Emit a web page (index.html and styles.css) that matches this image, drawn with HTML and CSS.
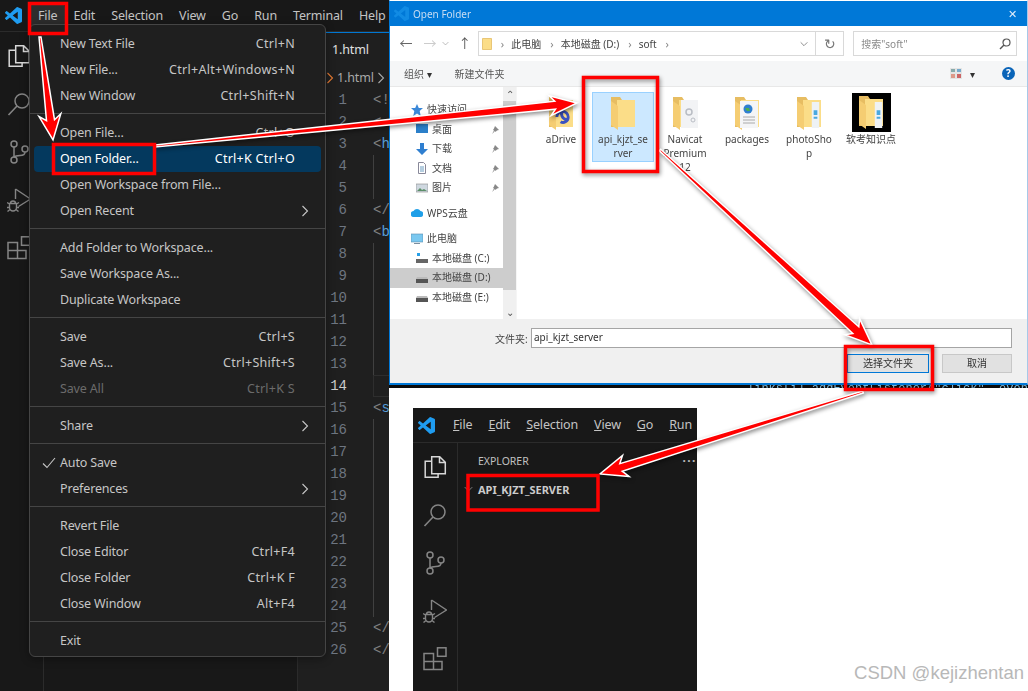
FILE: index.html
```html
<!DOCTYPE html>
<html lang="en">
<head>
<meta charset="utf-8">
<title>Open Folder in VS Code</title>
<link rel="stylesheet" href="styles.css">
</head>
<body>
<svg class="defs" width="0" height="0" aria-hidden="true">
  <symbol id="i-vscode" viewBox="0 0 24 24"><path fill="#1f9cf0" d="M23.15 2.587L18.21.21a1.494 1.494 0 0 0-1.705.29l-9.46 8.63-4.12-3.128a.999.999 0 0 0-1.276.057L.327 7.261A1 1 0 0 0 .326 8.74L3.899 12 .326 15.26a1 1 0 0 0 .001 1.479L1.65 17.94a.999.999 0 0 0 1.276.057l4.12-3.128 9.46 8.63a1.492 1.492 0 0 0 1.704.29l4.942-2.377A1.5 1.5 0 0 0 24 20.06V3.939a1.5 1.5 0 0 0-.85-1.352zm-5.146 14.861L10.826 12l7.178-5.448v10.896z"/></symbol>
  <symbol id="i-files" viewBox="0 0 24 24"><path fill="none" stroke="currentColor" stroke-width="1.5" d="M8.7 1.7h8l5.6 5.6v11.5H8.7zM16.5 1.7v5.8h5.8M8.7 6.3H2.2v16h12.9v-3.5"/></symbol>
  <symbol id="i-search" viewBox="0 0 24 24"><circle cx="15" cy="9" r="7" fill="none" stroke="currentColor" stroke-width="1.5"/><path fill="none" stroke="currentColor" stroke-width="1.6" d="M10 14 1.5 23"/></symbol>
  <symbol id="i-git" viewBox="0 0 24 24"><g fill="none" stroke="currentColor" stroke-width="1.5"><circle cx="7" cy="4" r="3"/><circle cx="7" cy="20" r="3"/><circle cx="18" cy="9" r="3"/><path d="M7 7v10M18 12c0 3-2 3.500-5 3.500-3 0-5 .5-6 2"/></g></symbol>
  <symbol id="i-debug" viewBox="0 0 24 24"><g fill="none" stroke="currentColor" stroke-width="1.400"><path d="M8.500 1 23.500 11 11.500 18.500M8.500 1v10"/><path d="M2.500 15.500h7v4a3.500 3.500 0 0 1-7 0zM3.500 15.500a2.500 2.500 0 0 1 5 0M2.500 16 0 14.500M2.500 19.500H0M3 21.500.5 23.500M9.500 16 12 14.500M9.500 19.500H12M9 21.500l2.500 2"/></g></symbol>
  <symbol id="i-ext" viewBox="0 0 24 24"><g fill="none" stroke="currentColor" stroke-width="1.500"><path d="M1 6.500h9.500v16H1zM1 14.500h18v8h-8.500"/><rect x="14.500" y="0.800" width="8.500" height="8.500"/></g></symbol>
  <symbol id="i-chev" viewBox="0 0 8 12"><path d="M1.500 1 6.500 6l-5 5" fill="none" stroke="currentColor" stroke-width="1.100"/></symbol>
  <symbol id="i-down" viewBox="0 0 12 8"><path d="M1 1.500 6 6.500l5-5" fill="none" stroke="currentColor" stroke-width="1.100"/></symbol>
  <symbol id="i-check" viewBox="0 0 14 12"><path d="M1 6.500 5 10.500 13 1" fill="none" stroke="currentColor" stroke-width="1.100"/></symbol>
  <symbol id="i-folder" viewBox="0 0 24 33"><path fill="#e7bd62" d="M0 0h9l2 3h13v27H0z"/><path fill="#fbdd88" d="M6 3h18v27H6z"/><path fill="#f5cd72" d="M0 4 7 9v24L0 28z"/></symbol>
  <symbol id="i-folder-s" viewBox="0 0 10 12"><path fill="#fbdd88" stroke="#e3bb62" stroke-width=".8" d="M.5.5h9v11h-9z"/></symbol>
</svg>

<section class="vs vs-main">
  <header class="vs-title">
    <svg class="logo"><use href="#i-vscode"/></svg>
    <nav class="vs-nav">
      <span class="nav-active">File</span><span>Edit</span><span>Selection</span><span>View</span><span>Go</span><span>Run</span><span>Terminal</span><span>Help</span>
    </nav>
  </header>
  <div class="vs-body">
    <aside class="activity">
      <svg class="act-ico act-on"><use href="#i-files"/></svg>
      <svg class="act-ico"><use href="#i-search"/></svg>
      <svg class="act-ico"><use href="#i-git"/></svg>
      <svg class="act-ico"><use href="#i-debug"/></svg>
      <svg class="act-ico"><use href="#i-ext"/></svg>
    </aside>
    <div class="sidebar"></div>
    <main class="editor">
      <div class="tabs"><div class="tab">1.html</div></div>
      <div class="crumbs"><svg class="crumb-ico"><use href="#i-chev"/></svg><span>1.html</span><svg class="crumb-chev"><use href="#i-chev"/></svg></div>
      <div class="code">
        <div class="ln"><b>1</b><i class="br">&lt;!</i></div>
        <div class="ln"><b>2</b><i class="br">&lt;</i></div>
        <div class="ln"><b>3</b><i class="br">&lt;<em>h</em></i></div>
        <div class="ln"><b>4</b><i class="guide"></i></div>
        <div class="ln"><b>5</b><i class="guide"></i></div>
        <div class="ln"><b>6</b><i class="br">&lt;/</i></div>
        <div class="ln"><b>7</b><i class="br">&lt;<em>b</em></i></div>
        <div class="ln"><b>8</b><i class="guide"></i></div>
        <div class="ln"><b>9</b><i class="guide"></i></div>
        <div class="ln"><b>10</b><i class="guide"></i></div>
        <div class="ln"><b>11</b><i class="guide"></i></div>
        <div class="ln"><b>12</b><i class="guide"></i></div>
        <div class="ln"><b>13</b><i class="guide"></i></div>
        <div class="ln ln-cur"><b>14</b><i class="guide"></i></div>
        <div class="ln"><b>15</b><i class="br">&lt;<em>s</em></i></div>
        <div class="ln"><b>16</b><i class="guide"></i></div>
        <div class="ln"><b>17</b><i class="guide"></i></div>
        <div class="ln"><b>18</b><i class="guide"></i></div>
        <div class="ln"><b>19</b><i class="guide"></i></div>
        <div class="ln"><b>20</b><i class="guide"></i></div>
        <div class="ln"><b>21</b><i class="guide"></i></div>
        <div class="ln"><b>22</b><i class="guide"></i></div>
        <div class="ln"><b>23</b><i class="guide"></i></div>
        <div class="ln"><b>24</b><i class="guide"></i></div>
        <div class="ln"><b>25</b><i class="br">&lt;/</i></div>
        <div class="ln"><b>26</b><i class="br">&lt;/</i></div>
      </div>
    </main>
  </div>
  <div class="menu">
    <div class="mi"><span>New Text File</span><kbd>Ctrl+N</kbd></div>
    <div class="mi"><span>New File...</span><kbd>Ctrl+Alt+Windows+N</kbd></div>
    <div class="mi"><span>New Window</span><kbd>Ctrl+Shift+N</kbd></div>
    <hr>
    <div class="mi"><span>Open File...</span><kbd>Ctrl+O</kbd></div>
    <div class="mi mi-on"><span>Open Folder...</span><kbd>Ctrl+K Ctrl+O</kbd></div>
    <div class="mi"><span>Open Workspace from File...</span></div>
    <div class="mi"><span>Open Recent</span><svg class="mi-chev"><use href="#i-chev"/></svg></div>
    <hr>
    <div class="mi"><span>Add Folder to Workspace...</span></div>
    <div class="mi"><span>Save Workspace As...</span></div>
    <div class="mi"><span>Duplicate Workspace</span></div>
    <hr>
    <div class="mi"><span>Save</span><kbd>Ctrl+S</kbd></div>
    <div class="mi"><span>Save As...</span><kbd>Ctrl+Shift+S</kbd></div>
    <div class="mi mi-off"><span>Save All</span><kbd>Ctrl+K S</kbd></div>
    <hr>
    <div class="mi"><span>Share</span><svg class="mi-chev"><use href="#i-chev"/></svg></div>
    <hr>
    <div class="mi"><svg class="mi-check"><use href="#i-check"/></svg><span>Auto Save</span></div>
    <div class="mi"><span>Preferences</span><svg class="mi-chev"><use href="#i-chev"/></svg></div>
    <hr>
    <div class="mi"><span>Revert File</span></div>
    <div class="mi"><span>Close Editor</span><kbd>Ctrl+F4</kbd></div>
    <div class="mi"><span>Close Folder</span><kbd>Ctrl+K F</kbd></div>
    <div class="mi"><span>Close Window</span><kbd>Alt+F4</kbd></div>
    <hr>
    <div class="mi"><span>Exit</span></div>
  </div>
</section>

<section class="dialog">
  <div class="dlg-win">
    <header class="dlg-title">
      <svg class="dlg-logo"><use href="#i-vscode"/></svg>
      <span class="dlg-name">Open Folder</span>
      <span class="dlg-x">✕</span>
    </header>
    <div class="dlg-addr">
      <span class="nav-btn nav-dark">←</span>
      <span class="nav-btn nav-pale">→</span>
      <svg class="nav-drop"><use href="#i-down"/></svg>
      <span class="nav-btn nav-up">↑</span>
      <div class="addr-box">
        <svg class="addr-folder"><use href="#i-folder-s"/></svg>
        <span class="sep">›</span><span>此电脑</span>
        <span class="sep">›</span><span>本地磁盘 (D:)</span>
        <span class="sep">›</span><span>soft</span>
        <span class="sep">›</span>
        <svg class="addr-drop"><use href="#i-down"/></svg>
        <span class="addr-refresh">↻</span>
      </div>
      <div class="search-box">
        <span>搜索"soft"</span>
        <svg class="search-ico" viewBox="0 0 12 12"><circle cx="7.500" cy="4.500" r="3.500" fill="none" stroke="#555" stroke-width="1.200"/><path d="M5 7 1 11" stroke="#555" stroke-width="1.500"/></svg>
      </div>
    </div>
    <div class="dlg-tools">
      <span class="tool-org">组织 <small>▾</small></span>
      <span class="tool-new">新建文件夹</span>
      <svg class="tool-view" viewBox="0 0 12 11"><rect width="12" height="11" fill="#e4e4e4"/><path d="M1 1h4v3H1z" fill="#8aa"/><path d="M7 1h4v3H7z" fill="#7ac"/><path d="M1 6h4v4H1z" fill="#d98"/><path d="M7 6h4v4H7z" fill="#c66"/></svg>
      <small class="tool-drop">▾</small>
      <span class="tool-help">?</span>
    </div>
    <div class="dlg-main">
      <ul class="tree">
        <li class="t-top"><svg viewBox="0 0 12 12"><path fill="#3b88d8" d="M6 0l1.800 4H12L8.700 7l1 5L6 9.500 2.300 12l1-5L0 4h4.200z"/></svg>快速访问</li>
        <li class="t-sub"><svg viewBox="0 0 12 12"><rect y="1" width="12" height="9" fill="#2b7fc9"/></svg>桌面<svg class="pin" viewBox="0 0 8 8"><path fill="#888" d="M4 0l4 4-2 .5L4.500 6 4 5 1 8 3 4.500 2 4l1-1.500z"/></svg></li>
        <li class="t-sub"><svg viewBox="0 0 12 12"><path fill="#2f7fd0" d="M4 0h4v6h4L6 12 0 6h4z"/></svg>下载<svg class="pin" viewBox="0 0 8 8"><path fill="#888" d="M4 0l4 4-2 .5L4.500 6 4 5 1 8 3 4.500 2 4l1-1.500z"/></svg></li>
        <li class="t-sub"><svg viewBox="0 0 12 12"><path fill="#fff" stroke="#889" d="M2.500.5h5l2 2v9h-7z"/><path stroke="#6a9cc0" d="M4 5h4M4 7h4M4 9h4"/></svg>文档<svg class="pin" viewBox="0 0 8 8"><path fill="#888" d="M4 0l4 4-2 .5L4.500 6 4 5 1 8 3 4.500 2 4l1-1.500z"/></svg></li>
        <li class="t-sub t-gap"><svg viewBox="0 0 12 12"><rect y="2" width="12" height="8" fill="#cfd8e0" stroke="#888" stroke-width=".6"/><path fill="#5c8f6a" d="M1 9l3-3 2 2 2-1 3 2z"/></svg>图片<svg class="pin" viewBox="0 0 8 8"><path fill="#888" d="M4 0l4 4-2 .5L4.500 6 4 5 1 8 3 4.500 2 4l1-1.500z"/></svg></li>
        <li class="t-top t-gap"><svg viewBox="0 0 12 12"><path fill="#1f9fe8" d="M3 10a3 3 0 0 1-.5-6A4 4 0 0 1 9.500 4 3 3 0 0 1 9 10z"/></svg>WPS云盘</li>
        <li class="t-top"><svg viewBox="0 0 12 12"><rect y="1" width="12" height="8" fill="#7ac8f0" stroke="#5a8cb0" stroke-width=".6"/><path stroke="#7a8ea0" d="M3 10.500h6"/></svg>此电脑</li>
        <li class="t-sub"><svg viewBox="0 0 12 12"><path fill="#28a0e8" d="M1 1h3v3H1z"/><rect y="7" width="12" height="4" fill="#666"/></svg>本地磁盘 (C:)</li>
        <li class="t-sub t-on"><svg viewBox="0 0 12 12"><path fill="#bbb" d="M1 5h10l1 2H0z"/><rect y="7" width="12" height="4" fill="#555"/></svg>本地磁盘 (D:)</li>
        <li class="t-sub"><svg viewBox="0 0 12 12"><path fill="#bbb" d="M1 5h10l1 2H0z"/><rect y="7" width="12" height="4" fill="#555"/></svg>本地磁盘 (E:)</li>
      </ul>
      <div class="scroll">
        <span class="sc-arrow">⌃</span>
        <div class="sc-thumb"></div>
        <span class="sc-arrow sc-end">⌄</span>
      </div>
      <div class="grid">
        <figure class="tile">
          <div class="tile-ico"><svg class="fold"><use href="#i-folder"/></svg><svg class="badge" viewBox="0 0 20 20"><path fill="none" stroke="#3a52c0" stroke-width="3" d="M4 10a6 6 0 0 1 12 0c0 5-5 7-8 5M10 4c-2 3-1 8 5 9"/></svg></div>
          <figcaption>aDrive</figcaption>
        </figure>
        <figure class="tile tile-on">
          <div class="tile-ico"><svg class="fold"><use href="#i-folder"/></svg></div>
          <figcaption>api_kjzt_se<br>rver</figcaption>
        </figure>
        <figure class="tile">
          <div class="tile-ico"><svg class="fold"><use href="#i-folder"/></svg><svg class="sheet" viewBox="0 0 18 28"><path fill="#f2f3f5" d="M1 0h17v28H1z"/><circle cx="9" cy="12" r="3" fill="none" stroke="#b9bdc4" stroke-width="1.500"/><circle cx="13" cy="20" r="2" fill="none" stroke="#b9bdc4"/></svg></div>
          <figcaption>Navicat<br>Premium<br>12</figcaption>
        </figure>
        <figure class="tile">
          <div class="tile-ico"><svg class="fold"><use href="#i-folder"/></svg><svg class="sheet sheet-wide" viewBox="0 0 18 28"><path fill="#f4f5f7" d="M0 1h18v27H0z"/><circle cx="8" cy="9" r="4.500" fill="#2f7fd0"/><path fill="#4caf50" d="M5 8h4l1 3H7z"/><path stroke="#aaa" d="M3 17h12M3 20h12M3 23h12"/></svg></div>
          <figcaption>packages</figcaption>
        </figure>
        <figure class="tile">
          <div class="tile-ico"><svg class="fold"><use href="#i-folder"/></svg><svg class="strip" viewBox="0 0 8 28"><path fill="#eef2f5" d="M0 0h8v28H0z"/><path fill="#4aa8e0" d="M2 9h4v5H2zM2 16h4v2H2z"/></svg></div>
          <figcaption>photoSho<br>p</figcaption>
        </figure>
        <figure class="tile tile-black">
          <div class="tile-ico"><svg class="fold"><use href="#i-folder"/></svg><svg class="strip" viewBox="0 0 8 28"><path fill="#eef2f5" d="M0 0h8v28H0z"/><path fill="#4aa8e0" d="M2 9h4v5H2zM2 16h4v2H2z"/></svg></div>
          <figcaption>软考知识点</figcaption>
        </figure>
      </div>
    </div>
    <div class="dlg-foot">
      <div class="foot-row">
        <label class="foot-label">文件夹:</label>
        <div class="foot-input">api_kjzt_server</div>
      </div>
      <div class="foot-btns">
        <span class="btn btn-main">选择文件夹</span>
        <span class="btn">取消</span>
      </div>
    </div>
  </div>
  <div class="dlg-under">links[i].addEventListener("click", event</div>
</section>

<section class="vs vs-small">
  <header class="vs-title vs-title-s">
    <svg class="logo"><use href="#i-vscode"/></svg>
    <nav class="vs-nav vs-nav-s">
      <span><u>F</u>ile</span><span><u>E</u>dit</span><span><u>S</u>election</span><span><u>V</u>iew</span><span><u>G</u>o</span><span><u>R</u>un</span>
    </nav>
  </header>
  <div class="vs-body">
    <aside class="activity activity-s">
      <svg class="act-ico act-on"><use href="#i-files"/></svg>
      <svg class="act-ico"><use href="#i-search"/></svg>
      <svg class="act-ico"><use href="#i-git"/></svg>
      <svg class="act-ico"><use href="#i-debug"/></svg>
      <svg class="act-ico"><use href="#i-ext"/></svg>
    </aside>
    <div class="explorer">
      <div class="exp-head"><span>EXPLORER</span><span class="exp-dots">···</span></div>
      <div class="exp-root"><svg class="exp-chev"><use href="#i-down"/></svg><span>API_KJZT_SERVER</span></div>
    </div>
  </div>
</section>

<div class="watermark">CSDN @kejizhentan</div>

<svg class="marks" viewBox="0 0 1028 691" aria-hidden="true">
  <g class="mark-shadow">
    <polygon class="arrow" points="660.700,149.300 858.800,326.800 859.600,318.600 872,345 844.700,334.800 852.800,333.400 659.300,150.700"/>
    <polygon class="arrow" points="155,145 554.700,101.200 549.100,95.700 577,103 551.100,115.700 555.500,109.200 155.100,147"/>
    <polygon class="arrow" points="862.700,391 619.800,463.600 622.500,455.500 600,474 629.100,476.500 622.200,471.200 863.300,393"/>
    <rect class="box" x="583.500" y="77.500" width="74" height="94"/>
    <rect class="box" x="845.500" y="346.500" width="87" height="43"/>
  </g>
  <polygon class="arrow" points="41,37 54.500,119.700 60.800,113.800 53,140 39,116.600 46.500,120.700 39,37"/>
  <rect class="box" x="29.500" y="3.500" width="37" height="30"/>
  <rect class="box" x="53.500" y="144.500" width="101" height="29"/>
  <rect class="box" x="468" y="475.500" width="130" height="34.500"/>
</svg>
</body>
</html>
```
FILE: styles.css
```css
* { box-sizing: border-box; }
html, body { margin: 0; padding: 0; }
body {
  position: relative;
  width: 1028px;
  height: 691px;
  overflow: hidden;
  background: #fff;
  font-family: "Noto Sans", "Noto Sans CJK SC", sans-serif;
}
.defs { position: absolute; }

/* VS Code windows */
.vs { position: absolute; display: flex; flex-direction: column; background: #181818; color: #ccc; overflow: hidden; }
.vs-main { left: 0; top: 0; width: 389px; height: 691px; }
.vs-small { left: 413px; top: 408px; width: 284px; height: 283px; }
.vs-title { flex: none; height: 32px; display: flex; align-items: center; border-bottom: 1px solid #2b2b2b; }
.vs-title-s { height: 35px; }
.logo { flex: none; width: 17px; height: 17px; margin: 0 8px 0 5px; }
.vs-nav { display: flex; font-size: 12.500px; letter-spacing: -.15px; line-height: 24px; color: #c4c4c4; white-space: nowrap; }
.vs-nav span { padding: 0 8px; }
.vs-nav .nav-active { background: #2d2d2d; border-radius: 4px; }
.vs-nav-s { margin-left: 2px; }
.vs-body { flex: 1; display: flex; min-height: 0; }
.activity { flex: none; width: 44px; border-right: 1px solid #2b2b2b; padding: 12px 5px 0 0; display: flex; flex-direction: column; align-items: center; gap: 24px; color: #858585; }
.activity-s { width: 45px; padding-right: 0; }
.act-ico { width: 24px; height: 24px; flex: none; }
.act-on { color: #d7d7d7; }
.sidebar { flex: none; width: 254px; border-right: 1px solid #2b2b2b; }
.editor { flex: 1; min-width: 0; background: #1f1f1f; }
.tabs { height: 34px; background: #181818; display: flex; }
.tab { width: 100%; background: #1f1f1f; border-top: 1px solid #0078d4; padding-left: 34px; font-size: 12.500px; letter-spacing: -.15px; line-height: 34px; color: #e0e0e0; }
.crumbs { height: 23px; display: flex; align-items: center; padding-left: 28px; font-size: 12.500px; letter-spacing: -.15px; color: #a8a8a8; gap: 3px; }
.crumb-ico { color: #e37933; width: 8px; height: 12px; }
.crumb-chev { width: 8px; height: 12px; }
.code { font-family: "Liberation Mono", monospace; font-size: 14px; }
.ln { height: 22px; line-height: 22px; display: flex; }
.ln b { flex: none; width: 49px; text-align: right; font-weight: normal; color: #6e7681; }
.ln i { font-style: normal; margin-left: 26px; flex: 1; }
.ln .br { color: #808080; }
.ln .br em { font-style: normal; color: #569cd6; }
.ln .guide { border-left: 1px solid #404040; }
.ln-cur b { color: #ccc; }
.ln-cur .guide { border: 1px solid #2e2e2e; border-right: 0; }

/* File menu */
.menu {
  position: absolute; left: 29px; top: 24px; width: 297px; height: 633px;
  padding: 6px 0 3px;
  background: #1f1f1f; border: 1px solid #454545; border-radius: 6px;
  box-shadow: 0 2px 8px rgba(0, 0, 0, .36);
  font-size: 12.500px; letter-spacing: -.15px; color: #c6c6c6;
}
.menu hr { margin: 4px 0 6px; border: 0; border-top: 1px solid #454545; }
.mi { position: relative; height: 26px; line-height: 26px; margin: 0 4px; padding: 0 26px; display: flex; justify-content: space-between; white-space: nowrap; border-radius: 4px; }
.mi kbd { font: inherit; letter-spacing: .28px; }
.mi-on { background: #04395e; color: #fff; }
.mi-off { color: #6b6b6b; }
.mi-chev { position: absolute; right: 12px; top: 7px; width: 8px; height: 12px; }
.mi-check { position: absolute; left: 8px; top: 7px; width: 14px; height: 12px; }

/* Folder dialog */
.dialog { position: absolute; left: 389px; top: 0; width: 639px; height: 388px; filter: blur(.3px); }
.dlg-win { height: 385px; display: flex; flex-direction: column; background: #fff; border: 1px solid #0078d7; border-top-color: #fff; border-bottom-width: 2px; border-right: 1px solid #a7c9e8; font-size: 10px; color: #333; }
.dlg-title { flex: none; height: 25px; background: #0078d7; display: flex; align-items: center; padding: 0 8px 0 4px; }
.dlg-logo { width: 15px; height: 15px; margin-right: 4px; opacity: .55; }
.dlg-name { flex: 1; color: #c6dcf2; }
.dlg-x { color: #e2eefa; font-size: 11px; padding-right: 2px; }
.dlg-addr { flex: none; height: 35px; display: flex; align-items: center; padding: 0 10px 0 4px; color: #444; }
.nav-btn { width: 24px; font-size: 13px; text-align: center; line-height: 1; }
.nav-dark { color: #666; }
.nav-pale { color: #ccc; }
.nav-drop { width: 7px; height: 5px; color: #999; margin: 0 3px 0 0; }
.nav-up { color: #555; width: 26px; }
.addr-box { width: 367px; height: 25px; border: 1px solid #d9d9d9; display: flex; align-items: center; padding-left: 3px; gap: 7px; position: relative; }
.addr-folder { width: 10px; height: 12px; }
.sep { color: #888; margin: 0 0 0 2px; font-size: 11px; }
.addr-drop { position: absolute; right: 35px; top: 9px; width: 8px; height: 6px; color: #666; }
.addr-refresh { position: absolute; right: 0; top: 0; width: 28px; height: 23px; border-left: 1px solid #d9d9d9; text-align: center; font-size: 14px; line-height: 23px; color: #777; }
.search-box { width: 164px; height: 25px; margin-left: 9px; border: 1px solid #d9d9d9; display: flex; align-items: center; justify-content: space-between; padding: 0 5px 0 7px; color: #8a8a8a; }
.search-ico { width: 12px; height: 12px; }
.dlg-tools { flex: none; height: 26px; background: #f5f6f7; border-bottom: 1px solid #e8e8e8; display: flex; align-items: center; padding-left: 14px; color: #555; }
.tool-org small, .tool-drop { font-size: 10px; color: #333; }
.tool-new { margin-left: 23px; }
.tool-view { width: 12px; height: 11px; margin-left: auto; }
.tool-drop { margin: 0 27px 0 8px; }
.tool-help { width: 13px; height: 13px; border-radius: 50%; background: #0a64b8; color: #fff; font-size: 10px; font-weight: 700; line-height: 13px; text-align: center; margin-right: 12px; }
.dlg-main { flex: 1; min-height: 0; display: flex; overflow: hidden; }
.tree { flex: none; width: 113px; margin: 0; padding: 13px 0 0; list-style: none; color: #444; overflow: hidden; }
.tree li { position: relative; height: 19.500px; line-height: 19.500px; display: flex; align-items: center; white-space: nowrap; }
.tree li > svg:first-child { flex: none; width: 12px; height: 12px; margin-right: 4px; }
.t-top { padding-left: 21px; }
.t-sub { padding-left: 26px; }
.t-gap { margin-bottom: 6px; }
.t-on { background: #cdcdcd; }
.pin { position: absolute; right: 4px; top: 6px; width: 8px; height: 8px; }
.scroll { flex: none; width: 13px; background: #f0f0f0; display: flex; flex-direction: column; font-size: 10px; color: #555; text-align: center; }
.sc-arrow { height: 14px; line-height: 14px; }
.sc-thumb { height: 189px; background: #cdcdcd; }
.sc-end { margin-top: auto; }
.grid { flex: 1; display: flex; padding: 5px 0 0 13px; background: #fff; border-left: 1px solid #f5f5f5; }
.tile { margin: 0; width: 62px; height: 70px; text-align: center; line-height: 14px; color: #444; overflow: visible; }
.tile-on { background: #cce8ff; border: 1px solid #99d1ff; }
.tile-ico { position: relative; width: 40px; height: 33px; margin: 5px auto 2px; display: flex; justify-content: center; }
.tile-on .tile-ico { margin-top: 4px; }
.tile figcaption { white-space: nowrap; }
.fold { width: 24px; height: 33px; flex: none; }
.badge { position: absolute; left: 12px; top: 10px; width: 19px; height: 20px; }
.sheet { position: absolute; left: 15px; top: 3px; width: 18px; height: 28px; }
.sheet-wide { left: 12px; width: 20px; }
.strip { position: absolute; left: 22px; top: 5px; width: 9px; height: 26px; }
.tile-black .tile-ico { background: #000; width: 39px; height: 39px; margin: 1px auto 0; align-items: center; }
.tile-black .strip { top: 9px; }
.dlg-foot { flex: none; height: 64px; background: #f0f0f0; padding: 9px 15px 0 0; }
.foot-row { display: flex; align-items: center; height: 20px; }
.foot-label { margin-left: 105px; width: 36px; color: #444; white-space: nowrap; }
.foot-input { flex: 1; height: 20px; padding-left: 2px; line-height: 17px; background: #fff; border: 1px solid #a5a5a5; color: #333; }
.foot-btns { display: flex; justify-content: flex-end; gap: 13px; margin-top: 6px; }
.btn { width: 70px; height: 19px; background: #e1e1e1; border: 1px solid #c8c8c8; text-align: center; line-height: 17px; color: #333; }
.btn-main { width: 82px; border: 1px solid #0078d7; }
.dlg-under { height: 3px; overflow: hidden; background: #0b0b0b; color: #7fb8d8; font-family: "Liberation Mono", monospace; font-size: 12px; line-height: 8px; padding-left: 358px; white-space: nowrap; }

/* Explorer (small window) */
.explorer { flex: 1; min-width: 0; padding-top: 9px; }
.exp-head { height: 18px; line-height: 18px; padding-left: 20px; color: #c0c0c0; display: flex; justify-content: space-between; white-space: nowrap; font-size: 10.500px; }
.exp-dots { font-weight: 700; font-size: 12px; letter-spacing: 1.500px; color: #bbb; }
.exp-root { height: 22px; margin-top: 8px; display: flex; align-items: center; font-weight: 700; color: #ccc; font-size: 11px; white-space: nowrap; padding-left: 6px; gap: 5px; }
.exp-chev { width: 9px; height: 6px; color: #999; flex: none; }

.watermark { position: absolute; right: 4px; bottom: 7px; font-family: "Liberation Sans", sans-serif; font-size: 18.500px; color: #b8b8b8; white-space: nowrap; }

/* Red annotations */
.marks { position: absolute; left: 0; top: 0; width: 1028px; height: 691px; pointer-events: none; }
.mark-shadow { filter: drop-shadow(1px 2px 2px rgba(0, 0, 0, .45)); }
.arrow { fill: #f00; stroke: #fff; stroke-width: 1.500; stroke-linejoin: miter; }
.box { fill: none; stroke: #f00; stroke-width: 3.500; }
```
